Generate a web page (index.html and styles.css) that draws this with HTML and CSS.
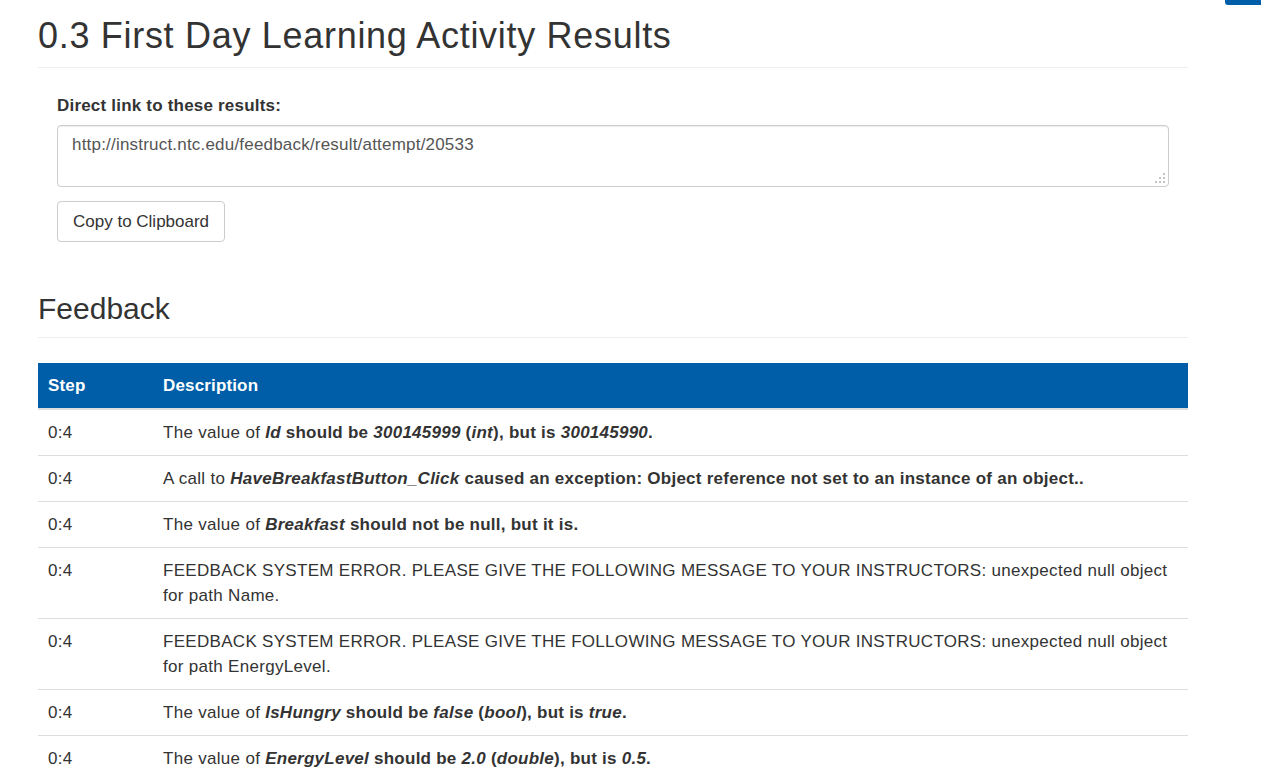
FILE: index.html
```html
<!DOCTYPE html>
<html lang="en">
<head>
    <meta charset="UTF-8">
    <meta name="viewport" content="width=device-width, initial-scale=1.0">
    <title>0.3 First Day Learning Activity Results</title>
    <link rel="stylesheet" href="styles.css">
</head>
<body>
    <a href="#" class="corner-tab"></a>

    <div class="container">
        <div class="page-header">
            <h1>0.3 First Day Learning Activity Results</h1>
        </div>

        <div class="link-box">
            <label class="link-label" for="result-link">Direct link to these results:</label>
            <div class="input-wrap">
                <textarea id="result-link" class="link-input" readonly>http://instruct.ntc.edu/feedback/result/attempt/20533</textarea>
                <svg class="grip" width="10" height="10" viewBox="0 0 10 10">
                    <rect x="8" y="0" width="2" height="2"/>
                    <rect x="4" y="4" width="2" height="2"/>
                    <rect x="8" y="4" width="2" height="2"/>
                    <rect x="0" y="8" width="2" height="2"/>
                    <rect x="4" y="8" width="2" height="2"/>
                    <rect x="8" y="8" width="2" height="2"/>
                </svg>
            </div>
            <button class="btn">Copy to Clipboard</button>
        </div>

        <div class="section-header">
            <h2>Feedback</h2>
        </div>

        <table class="feedback-table">
            <thead>
                <tr>
                    <th class="col-step">Step</th>
                    <th>Description</th>
                </tr>
            </thead>
            <tbody>
                <tr>
                    <td>0:4</td>
                    <td>The value of <b><i>Id</i> should be <i>300145999</i> (<i>int</i>), but is <i>300145990</i>.</b></td>
                </tr>
                <tr>
                    <td>0:4</td>
                    <td>A call to <b><i>HaveBreakfastButton_Click</i> caused an exception: Object reference not set to an instance of an object..</b></td>
                </tr>
                <tr>
                    <td>0:4</td>
                    <td>The value of <b><i>Breakfast</i> should not be null, but it is.</b></td>
                </tr>
                <tr>
                    <td>0:4</td>
                    <td>FEEDBACK SYSTEM ERROR. PLEASE GIVE THE FOLLOWING MESSAGE TO YOUR INSTRUCTORS: unexpected null object for path Name.</td>
                </tr>
                <tr>
                    <td>0:4</td>
                    <td>FEEDBACK SYSTEM ERROR. PLEASE GIVE THE FOLLOWING MESSAGE TO YOUR INSTRUCTORS: unexpected null object for path EnergyLevel.</td>
                </tr>
                <tr>
                    <td>0:4</td>
                    <td>The value of <b><i>IsHungry</i> should be <i>false</i> (<i>bool</i>), but is <i>true</i>.</b></td>
                </tr>
                <tr>
                    <td>0:4</td>
                    <td>The value of <b><i>EnergyLevel</i> should be <i>2.0</i> (<i>double</i>), but is <i>0.5</i>.</b></td>
                </tr>
            </tbody>
        </table>
    </div>
</body>
</html>
```

FILE: styles.css
```css
body {
    font-family: "Liberation Sans", Arial, Helvetica, sans-serif;
    font-size: 17px;
    line-height: 25px;
    letter-spacing: 0.15px;
    margin: 0;
    padding: 0;
    background-color: #fff;
    color: #333;
}
.corner-tab {
    position: fixed;
    top: 0;
    right: 0;
    width: 36px;
    height: 5px;
    background-color: #005ea8;
    border-bottom-left-radius: 3px;
}
.container {
    width: 1150px;
    margin-left: 38px;
}
.page-header {
    padding-bottom: 11px;
    border-bottom: 1px solid #eee;
}
.page-header h1 {
    margin: 16px 0 0;
    font-size: 36px;
    font-weight: normal;
    line-height: 40px;
    letter-spacing: 0.7px;
}
.link-box {
    padding: 26px 19px 0;
}
.link-label {
    display: block;
    font-weight: bold;
    line-height: 24px;
    letter-spacing: 0.2px;
    margin-bottom: 7px;
}
.input-wrap {
    position: relative;
}
.link-input {
    display: block;
    width: 100%;
    height: 62px;
    box-sizing: border-box;
    padding: 8px 14px;
    font-family: inherit;
    font-size: 17px;
    line-height: 22px;
    letter-spacing: 0.2px;
    color: #555;
    border: 1px solid #ccc;
    border-radius: 4px;
    box-shadow: inset 0 1px 1px rgba(0,0,0,0.075);
    resize: none;
}
.grip {
    position: absolute;
    right: 4px;
    bottom: 4px;
    fill: #c4c4c4;
}
.btn {
    display: block;
    margin-top: 14px;
    padding: 9px 15px 8px;
    font-family: inherit;
    font-size: 17px;
    line-height: 22px;
    letter-spacing: 0;
    color: #333;
    background-color: #fff;
    border: 1px solid #ccc;
    border-radius: 4px;
    cursor: pointer;
}
.btn:hover {
    background-color: #e6e6e6;
}
.section-header {
    margin-top: 50px;
    padding-bottom: 12px;
    border-bottom: 1px solid #eee;
}
.section-header h2 {
    margin: 0;
    font-size: 30px;
    font-weight: normal;
    line-height: 33px;
    letter-spacing: 0;
}
.feedback-table {
    width: 100%;
    margin-top: 25px;
    border-collapse: collapse;
    border-spacing: 0;
}
.feedback-table th,
.feedback-table td {
    padding: 10px;
    text-align: left;
    vertical-align: top;
}
.feedback-table td {
    letter-spacing: 0.3px;
}
.feedback-table td b {
    letter-spacing: 0.25px;
}
.feedback-table thead th {
    background-color: #005ea8;
    color: #fff;
    font-weight: bold;
    border-bottom: 2px solid #ddd;
}
.feedback-table tbody td {
    border-top: 1px solid #ddd;
}
.feedback-table tbody tr:first-child td {
    border-top: none;
}
.col-step {
    width: 95px;
}
```
